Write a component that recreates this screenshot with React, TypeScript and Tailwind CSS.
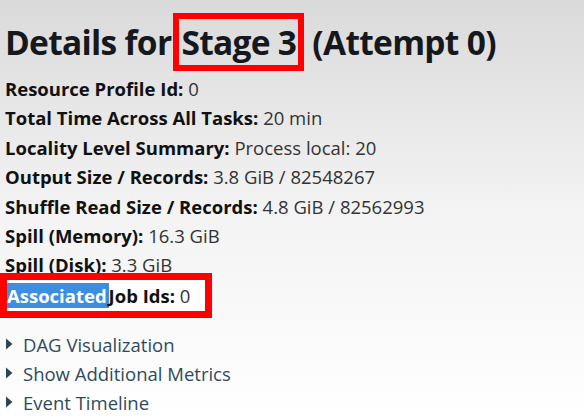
const rows: [string, string][] = [
  ["Resource Profile Id:", "0"],
  ["Total Time Across All Tasks:", "20 min"],
  ["Locality Level Summary:", "Process local: 20"],
  ["Output Size / Records:", "3.8 GiB / 82548267"],
  ["Shuffle Read Size / Records:", "4.8 GiB / 82562993"],
  ["Spill (Memory):", "16.3 GiB"],
  ["Spill (Disk):", "3.3 GiB"],
];

const links = ["DAG Visualization", "Show Additional Metrics", "Event Timeline"];

function Arrow() {
  return (
    <svg width="8" height="12" viewBox="0 0 8 12" className="shrink-0">
      <path d="M1 0.5 L7.5 6 L1 11.5 Z" fill="#2b4459" />
    </svg>
  );
}

export default function App() {
  return (
    <div
      className="h-[418px] w-[584px] overflow-hidden bg-gradient-to-b from-[#dadada] via-[#f3f3f3] to-white text-[#222]"
      style={{ fontFamily: '"Open Sans", "Noto Sans", sans-serif' }}
    >
      <h1 className="flex items-center pl-[5px] pt-[13px] text-[33.5px] font-bold tracking-[-0.7px] text-[#15181c]">
        <span>Details for&nbsp;</span>
        <span className="-ml-[6px] border-[6px] border-[#ff0000] px-[2px] leading-[46px]">Stage 3</span>
        <span>&nbsp;(Attempt 0)</span>
      </h1>

      <div className="mt-[3px] flex flex-col pl-[5px] text-[18.5px] leading-[29.4px]">
        {rows.map(([k, v]) => (
          <div key={k}>
            <span className="font-bold text-[#111]">{k}</span>{" "}
            <span className="text-[#333]">{v}</span>
          </div>
        ))}
        <div className="-ml-[5px] mt-[-7px] w-[212px] border-[7px] border-[#ff0000] bg-white leading-[31px]">
          <span className="bg-[#3d8ee0] pr-[2px] font-bold text-white">Associated</span>
          <span className="font-bold text-[#111]">Job Ids:</span>{" "}
          <span className="text-[#333]">0</span>
        </div>
      </div>

      <div className="mt-[12px] flex flex-col pl-[5px] text-[18.5px] leading-[29px] text-[#2f4a60]">
        {links.map((l) => (
          <div key={l} className="flex items-center gap-[10px]">
            <Arrow />
            <span>{l}</span>
          </div>
        ))}
      </div>
    </div>
  );
}
